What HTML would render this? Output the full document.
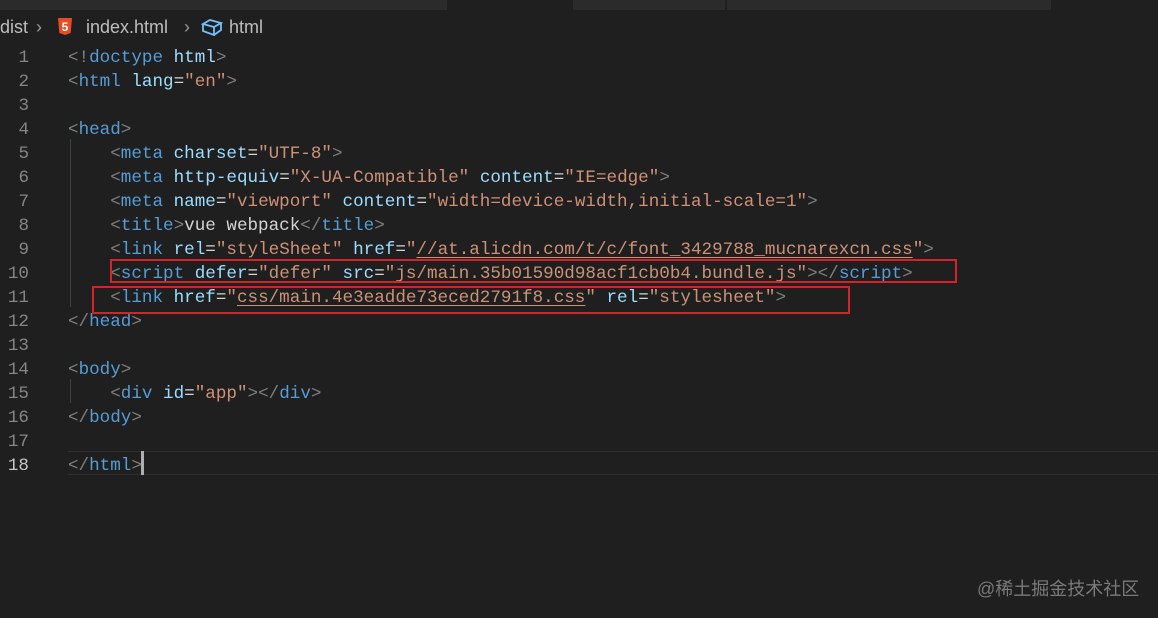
<!DOCTYPE html>
<html><head><meta charset="utf-8"><style>
body{margin:0;width:1158px;height:618px;background:#1f1f1f;overflow:hidden;position:relative;font-family:"Liberation Mono",monospace;}
.top{position:absolute;top:0;height:10px;background:#2b2b2b}
.bc{position:absolute;top:14px;left:0;height:26px;font-family:"Liberation Sans",sans-serif;font-size:18px;color:#bdbdbd;line-height:26px;white-space:nowrap}
.ln{position:absolute;left:0;width:29px;text-align:right;font-size:17.6px;color:#858585;line-height:24px;margin-top:3px}
.cd{position:absolute;left:68px;font-size:17.6px;line-height:24px;white-space:pre;color:#d4d4d4;margin-top:3px}
.p{color:#808080}.t{color:#569cd6}.a{color:#9cdcfe}.s{color:#ce9178}.u{text-decoration:underline;text-underline-offset:3px}
.g{position:absolute;left:70px;width:1px;background:#404040}
.box{position:absolute;border:2px solid #d5232b;box-sizing:border-box}
</style></head><body>
<div class="top" style="left:0;width:447px"></div>
<div class="top" style="left:573px;width:152px"></div>
<div class="top" style="left:727px;width:324px"></div>
<div class="bc"><span style="position:absolute;left:0">dist</span><span style="position:absolute;left:36px;color:#999">&#8250;</span>
<svg style="position:absolute;left:57px;top:3px" width="16" height="19" viewBox="0 0 16 19"><path d="M1 1h14l-1.3 15L8 18 2.3 16z" fill="#e44d26"/><text x="8" y="14" font-size="12" font-family="Liberation Sans" font-weight="bold" fill="#fff" text-anchor="middle">5</text></svg>
<span style="position:absolute;left:86px">index.html</span><span style="position:absolute;left:184px;color:#999">&#8250;</span>
<svg style="position:absolute;left:201px;top:4px" width="22" height="18" viewBox="0 0 22 18" fill="none" stroke="#75beff" stroke-width="1.8"><path d="M2 6l7-4 11 3-7 4zM2 6v7l11 4V9M20 5v7l-7 5"/></svg>
<span style="position:absolute;left:229px">html</span></div>
<div style="position:absolute;left:68px;top:451px;width:1090px;height:24px;border-top:1px solid #2e2e2e;border-bottom:1px solid #2e2e2e;box-sizing:border-box"></div>
<div style="position:absolute;left:141px;top:451px;width:3px;height:24px;background:#aeafad"></div>
<div class="g" style="top:139px;height:168px"></div>
<div class="g" style="top:379px;height:24px"></div>
<div class="ln" style="top:43px">1</div><div class="ln" style="top:67px">2</div><div class="ln" style="top:91px">3</div><div class="ln" style="top:115px">4</div><div class="ln" style="top:139px">5</div><div class="ln" style="top:163px">6</div><div class="ln" style="top:187px">7</div><div class="ln" style="top:211px">8</div><div class="ln" style="top:235px">9</div><div class="ln" style="top:259px">10</div><div class="ln" style="top:283px">11</div><div class="ln" style="top:307px">12</div><div class="ln" style="top:331px">13</div><div class="ln" style="top:355px">14</div><div class="ln" style="top:379px">15</div><div class="ln" style="top:403px">16</div><div class="ln" style="top:427px">17</div><div class="ln" style="top:451px;color:#c6c6c6">18</div>
<div class="cd" style="top:43px"><span class="p">&lt;!</span><span class="t">doctype</span> <span class="a">html</span><span class="p">&gt;</span></div>
<div class="cd" style="top:67px"><span class="p">&lt;</span><span class="t">html</span> <span class="a">lang</span>=<span class="s">"en"</span><span class="p">&gt;</span></div>
<div class="cd" style="top:115px"><span class="p">&lt;</span><span class="t">head</span><span class="p">&gt;</span></div>
<div class="cd" style="top:139px">    <span class="p">&lt;</span><span class="t">meta</span> <span class="a">charset</span>=<span class="s">"UTF-8"</span><span class="p">&gt;</span></div>
<div class="cd" style="top:163px">    <span class="p">&lt;</span><span class="t">meta</span> <span class="a">http-equiv</span>=<span class="s">"X-UA-Compatible"</span> <span class="a">content</span>=<span class="s">"IE=edge"</span><span class="p">&gt;</span></div>
<div class="cd" style="top:187px">    <span class="p">&lt;</span><span class="t">meta</span> <span class="a">name</span>=<span class="s">"viewport"</span> <span class="a">content</span>=<span class="s">"width=device-width,initial-scale=1"</span><span class="p">&gt;</span></div>
<div class="cd" style="top:211px">    <span class="p">&lt;</span><span class="t">title</span><span class="p">&gt;</span>vue webpack<span class="p">&lt;/</span><span class="t">title</span><span class="p">&gt;</span></div>
<div class="cd" style="top:235px">    <span class="p">&lt;</span><span class="t">link</span> <span class="a">rel</span>=<span class="s">"styleSheet"</span> <span class="a">href</span>=<span class="s">"<span class="u">//at.alicdn.com/t/c/font_3429788_mucnarexcn.css</span>"</span><span class="p">&gt;</span></div>
<div class="cd" style="top:259px">    <span class="p">&lt;</span><span class="t">script</span> <span class="a">defer</span>=<span class="s">"defer"</span> <span class="a">src</span>=<span class="s">"js/main.35b01590d98acf1cb0b4.bundle.js"</span><span class="p">&gt;&lt;/</span><span class="t">script</span><span class="p">&gt;</span></div>
<div class="cd" style="top:283px">    <span class="p">&lt;</span><span class="t">link</span> <span class="a">href</span>=<span class="s">"<span class="u">css/main.4e3eadde73eced2791f8.css</span>"</span> <span class="a">rel</span>=<span class="s">"stylesheet"</span><span class="p">&gt;</span></div>
<div class="cd" style="top:307px"><span class="p">&lt;/</span><span class="t">head</span><span class="p">&gt;</span></div>
<div class="cd" style="top:355px"><span class="p">&lt;</span><span class="t">body</span><span class="p">&gt;</span></div>
<div class="cd" style="top:379px">    <span class="p">&lt;</span><span class="t">div</span> <span class="a">id</span>=<span class="s">"app"</span><span class="p">&gt;&lt;/</span><span class="t">div</span><span class="p">&gt;</span></div>
<div class="cd" style="top:403px"><span class="p">&lt;/</span><span class="t">body</span><span class="p">&gt;</span></div>
<div class="cd" style="top:451px"><span class="p">&lt;/</span><span class="t">html</span><span class="p">&gt;</span></div>
<div class="box" style="left:110px;top:259px;width:847px;height:24px"></div>
<div class="box" style="left:92px;top:286px;width:758px;height:28px"></div>
<div style="position:absolute;left:977px;top:575px;font-family:'Liberation Sans','Noto Sans CJK SC',sans-serif;font-size:18px;color:#7a7a7a">@稀土掘金技术社区</div>
</body></html>
